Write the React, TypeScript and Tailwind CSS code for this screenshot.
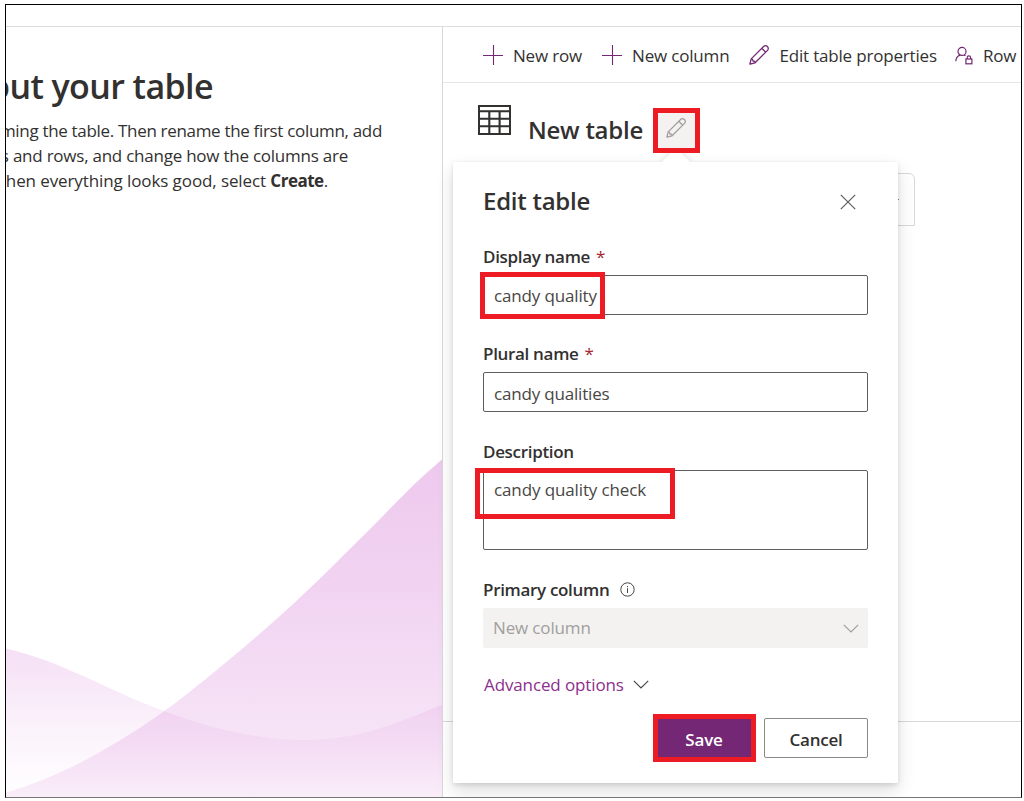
import type { ReactNode } from "react";

function PlusIcon() {
  return (
    <svg width="20" height="20" viewBox="0 0 20 20" fill="none" stroke="#742774" strokeWidth="1.1" className="shrink-0">
      <path d="M0 10.5H20M10.5 0V20" />
    </svg>
  );
}

function PencilIcon({ color }: { color: string }) {
  return (
    <svg width="20" height="20" viewBox="0 0 20 20" fill="none" stroke={color} strokeWidth="1.3" strokeLinejoin="round" className="shrink-0">
      <path d="M0.9 19.1L2.2 13.9L14.6 1.5C15.7 .4 17.3 .4 18.4 1.5C19.6 2.7 19.6 4.3 18.5 5.4L6.1 17.8Z" />
      <path d="M2.2 13.9C3.4 14 4 14.6 4 16C5.3 16 6 16.6 6.1 17.8" />
      <path d="M12.8 3.3L16.7 7.2" />
    </svg>
  );
}

function PersonLockIcon() {
  return (
    <svg width="18" height="20" viewBox="0 0 18 20" fill="none" stroke="#742774" strokeWidth="1.2" className="-ml-[2px] shrink-0">
      <circle cx="7" cy="6.4" r="4" />
      <path d="M0.8 16.2C1 13 2.8 10.9 5 10.1M9 10C9.6 10.2 10.1 10.5 10.5 10.9" />
      <rect x="10.9" y="14" width="6" height="4.8" />
      <path d="M12.2 14V12.4C12.2 11.4 12.9 10.8 13.9 10.8S15.6 11.4 15.6 12.4V14" />
    </svg>
  );
}

function TableIcon() {
  return (
    <svg width="33" height="30" viewBox="0 0 33 30" fill="none" stroke="#323130" className="shrink-0">
      <rect x="1" y="1" width="31" height="28" strokeWidth="2" />
      <path d="M1 6.3H32M1 13.8H32M1 21.3H32" strokeWidth="2.1" />
      <path d="M11.3 6V29M21.6 6V29" strokeWidth="2.1" />
    </svg>
  );
}

function Chevron({ color }: { color: string }) {
  return (
    <svg width="16" height="9" viewBox="0 0 16 9" fill="none" stroke={color} strokeWidth="1.2">
      <path d="M0.8 0.8L8 8L15.2 0.8" />
    </svg>
  );
}

function Command({ icon, children }: { icon: ReactNode; children: ReactNode }) {
  return (
    <div className="flex shrink-0 items-center gap-[10px]">
      {icon}
      <span className="pt-[2px]">{children}</span>
    </div>
  );
}

function Label({ required, children }: { required?: boolean; children: ReactNode }) {
  return (
    <div className="flex h-[31px] items-start pt-px text-[17px] leading-[24px] font-semibold tracking-[-0.32px] text-[#323130]">
      {children}
      {required && <span className="pl-[6px] font-normal text-[#a4262c]">*</span>}
    </div>
  );
}

function Waves() {
  return (
    <svg width="436" height="340" viewBox="6 458 436 340" className="block shrink-0">
      <defs>
        <linearGradient id="rise" gradientUnits="userSpaceOnUse" x1="0" y1="460" x2="0" y2="798">
          <stop offset="0" stopColor="#c850c8" stopOpacity=".31" />
          <stop offset=".4" stopColor="#c850c8" stopOpacity=".245" />
          <stop offset=".83" stopColor="#c850c8" stopOpacity=".155" />
          <stop offset="1" stopColor="#c850c8" stopOpacity=".1" />
        </linearGradient>
        <linearGradient id="dip" gradientUnits="userSpaceOnUse" x1="0" y1="649" x2="0" y2="798">
          <stop offset="0" stopColor="#c850c8" stopOpacity=".18" />
          <stop offset=".5" stopColor="#c850c8" stopOpacity=".08" />
          <stop offset="1" stopColor="#c850c8" stopOpacity="0" />
        </linearGradient>
      </defs>
      <path fill="url(#rise)" d="M442 460.5C420 479 401 498 380 520C340 560 306 594 280 617C245 648 190 694 163 713C110 750 60 778 6 793.5V798H442Z" />
      <path fill="url(#dip)" d="M6 649.5C64 663 104 690 164 712C215 731 260 741 305 741C355 741 392 727 442 705.5V798H6Z" />
    </svg>
  );
}

export default function App() {
  return (
    <div className="h-[801px] w-[1024px] overflow-hidden bg-white pt-1 pl-[5px] font-['Open_Sans',sans-serif] text-[#323130]">
      <div className="relative flex h-[794px] w-[1017px] flex-col overflow-hidden border border-black border-b-[#767676]">
        <div className="h-[22px] shrink-0 border-b border-[#dcdcdc]" />
        <div className="flex min-h-0 flex-1">
          <section className="flex w-[437px] shrink-0 flex-col justify-between overflow-hidden border-r border-[#d8d8d8]">
            <div className="flex flex-col items-start pt-[34px]">
              <div className="flex w-[207px] justify-end">
                <h1 className="text-[34px] leading-[50px] font-semibold tracking-[-0.6px] whitespace-nowrap">about your table</h1>
              </div>
              <div className="flex flex-col items-start pt-[7px] text-[17px] leading-[25px] whitespace-nowrap">
                <p className="flex w-[376px] justify-end tracking-[-0.32px]">naming the table. Then rename the first column, add</p>
                <p className="flex w-[342px] justify-end tracking-[-0.24px]">columns and rows, and change how the columns are</p>
                <p className="flex w-[322px] justify-end tracking-[-0.1px]">
                  <span>
                    When everything looks good, select <b className="tracking-[-0.5px]">Create</b>.
                  </span>
                </p>
              </div>
            </div>
            <Waves />
          </section>
          <section className="flex min-w-0 flex-1 flex-col">
            <div className="flex h-14 shrink-0 items-center gap-5 border-b border-[#e6e6e6] pl-10 text-[17px] tracking-[-0.18px] whitespace-nowrap">
              <Command icon={<PlusIcon />}>New row</Command>
              <Command icon={<PlusIcon />}>New column</Command>
              <Command icon={<PencilIcon color="#742774" />}>Edit table properties</Command>
              <Command icon={<PersonLockIcon />}>Row</Command>
            </div>
            <div className="flex h-[90px] shrink-0 items-start pt-[22px] pl-[35px]">
              <TableIcon />
              <h2 className="pt-[9px] pl-[17px] text-[24px] leading-[32px] font-semibold tracking-[-0.26px] whitespace-nowrap">New table</h2>
            </div>
            <div className="ml-10 flex h-[53px] w-[432px] shrink-0 items-center justify-end rounded-t-[6px] border border-[#d8d8d8]">
              <div className="mr-[15px] h-px w-[4px] bg-[#7a6fc0]" />
            </div>
            <div className="flex-1" />
            <div className="h-[76px] shrink-0 border-t border-[#d8d8d8]" />
          </section>
        </div>

        <div className="absolute top-[157px] left-[447px] h-[621px] w-[445px] rounded-[2px] bg-white shadow-[0_8px_18px_0_rgba(0,0,0,0.132),0_1.5px_4.5px_0_rgba(0,0,0,0.108)]">
          <div className="absolute -top-[10px] left-[213px] size-5 rotate-45 bg-white shadow-[0_0_8px_0_rgba(0,0,0,0.14)]" />
          <div className="relative flex h-full flex-col rounded-[2px] bg-white px-[30px] pt-5">
            <div className="flex h-10 shrink-0 items-center justify-between pr-3">
              <h3 className="pb-[2px] text-[24px] leading-[32px] font-semibold tracking-[-0.26px]">Edit table</h3>
              <svg width="16" height="16" viewBox="0 0 16 16" fill="none" stroke="#605e5c" strokeWidth="1.2">
                <path d="M0.8 0.8L15.2 15.2M15.2 0.8L0.8 15.2" />
              </svg>
            </div>
            <div className="flex flex-col pt-[22px]">
              <Label required>Display name</Label>
              <div className="flex h-10 items-center rounded-[2px] border border-[#605e5c] pt-[2px] pl-[10px] text-[17px] tracking-[-0.15px] text-[#484644]">candy quality</div>
            </div>
            <div className="flex flex-col pt-[26px]">
              <Label required>Plural name</Label>
              <div className="flex h-10 items-center rounded-[2px] border border-[#605e5c] pt-[3px] pl-[10px] text-[17px] tracking-[-0.18px] text-[#484644]">candy qualities</div>
            </div>
            <div className="flex flex-col pt-[27px]">
              <Label>Description</Label>
              <div className="h-20 rounded-[2px] border border-[#605e5c] pt-[7px] pl-[10px] text-[17px] leading-[24px] tracking-[-0.12px] text-[#484644]">candy quality check</div>
            </div>
            <div className="flex flex-col pt-[27px]">
              <div className="flex">
                <Label>Primary column</Label>
                <svg width="15" height="15" viewBox="0 0 15 15" fill="none" stroke="#484644" className="mt-[5px] ml-[11px]">
                  <circle cx="7.5" cy="7.5" r="6.7" />
                  <path d="M7.5 6.2V11M7.5 4V5.2" />
                </svg>
              </div>
              <div className="flex h-10 items-center justify-between rounded-[2px] bg-[#f3f2f1] pr-[9px] pl-[10px] text-[17px] tracking-[-0.15px] text-[#a19f9d]">
                <span>New column</span>
                <Chevron color="#a19f9d" />
              </div>
            </div>
            <div className="flex items-center gap-[9px] pt-[24px] pl-px text-[17px] leading-[24px] tracking-[-0.12px] text-[#8d2f8d]">
              <span className="relative top-px">Advanced options</span>
              <Chevron color="#484644" />
            </div>
            <div className="flex justify-end gap-3 pt-[22px] text-[17px] font-semibold tracking-[-0.2px]">
              <div className="flex h-10 w-[95px] items-center justify-center bg-[#742774] pt-1 pr-px text-white">Save</div>
              <div className="flex h-10 w-[104px] items-center justify-center rounded-[2px] border border-[#8a8886] pt-[3px]">Cancel</div>
            </div>
          </div>
        </div>

        <div className="absolute top-[103px] left-[647px] flex h-[45px] w-[47px] items-center justify-center border-5 border-[#ed1c24] bg-[#f3f2f1] pr-px pb-[5px]">
          <PencilIcon color="#a19f9d" />
        </div>
        <div className="absolute top-[267px] left-[474px] h-[47px] w-[125px] border-5 border-[#ed1c24]" />
        <div className="absolute top-[463px] left-[469px] h-[51px] w-[200px] border-5 border-[#ed1c24]" />
        <div className="absolute top-[709px] left-[647px] h-[48px] w-[103px] border-5 border-[#ed1c24]" />
      </div>
    </div>
  );
}
